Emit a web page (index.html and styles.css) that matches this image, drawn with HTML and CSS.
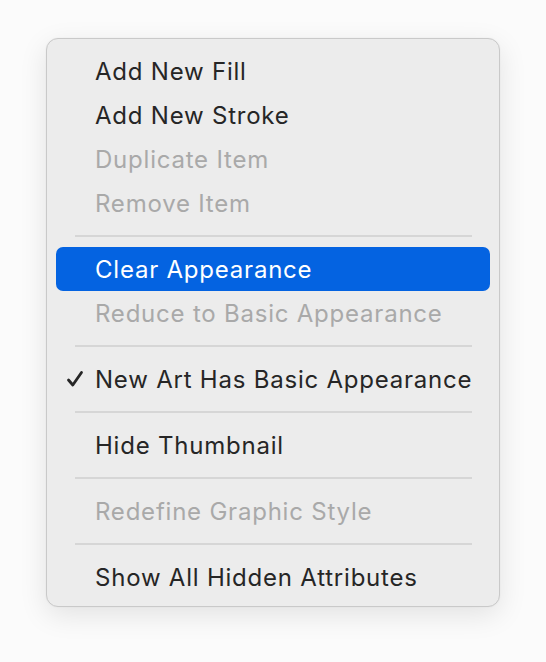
FILE: index.html
```html
<!DOCTYPE html>
<html>
<head>
<meta charset="utf-8">
<link rel="stylesheet" href="styles.css">
</head>
<body>
<div class="menu">
  <div class="item">Add New Fill</div>
  <div class="item">Add New Stroke</div>
  <div class="item disabled">Duplicate Item</div>
  <div class="item disabled">Remove Item</div>
  <div class="sep"></div>
  <div class="item active">Clear Appearance</div>
  <div class="item disabled">Reduce to Basic Appearance</div>
  <div class="sep"></div>
  <div class="item"><span class="check"><svg width="18" height="18" viewBox="0 0 18 18"><path d="M2.5 10 L6.8 15 L15.5 2.5" fill="none" stroke="#262626" stroke-width="2.8" stroke-linecap="round" stroke-linejoin="round"/></svg></span>New Art Has Basic Appearance</div>
  <div class="sep"></div>
  <div class="item">Hide Thumbnail</div>
  <div class="sep"></div>
  <div class="item disabled">Redefine Graphic Style</div>
  <div class="sep"></div>
  <div class="item">Show All Hidden Attributes</div>
</div>
</body>
</html>
```
FILE: styles.css
```css
html, body {
  margin: 0;
  padding: 0;
  background: #fbfbfb;
  width: 546px;
  height: 662px;
  overflow: hidden;
}
body {
  padding: 38px 0 0 46px;
  box-sizing: border-box;
}
.menu {
  width: 454px;
  box-sizing: border-box;
  background: #ececec;
  border: 1px solid #c9c9c9;
  border-radius: 12px;
  padding: 10px 9px 7px 9px;
  box-shadow: 0 8px 28px rgba(0,0,0,0.10), 0 0 2px rgba(0,0,0,0.05);
  font-family: Inter, "Noto Sans", sans-serif;
  font-size: 24px;
  letter-spacing: 0.78px;
  color: #262626;
}
.item {
  position: relative;
  height: 44px;
  display: flex;
  align-items: center;
  padding-left: 39px;
  border-radius: 7px;
}
.item.disabled {
  color: #a9a9a9;
}
.item.active {
  background: #0463e1;
  color: #ffffff;
}
.check {
  position: absolute;
  left: 10px;
  top: 13px;
  width: 18px;
  height: 18px;
}
.check svg { display: block; }
.sep {
  height: 2px;
  background: #d6d6d6;
  margin: 10px 18px 10px 19px;
}
```
